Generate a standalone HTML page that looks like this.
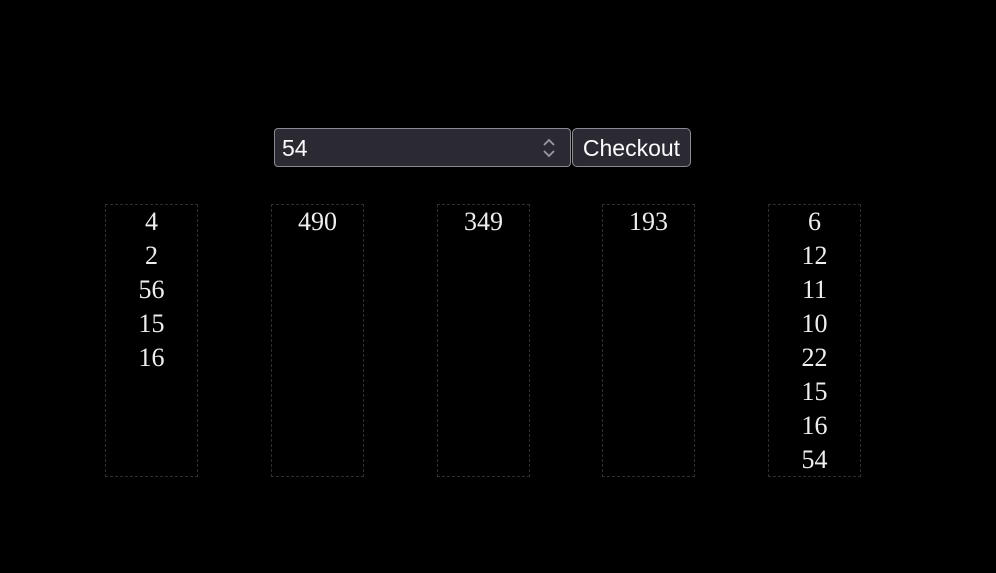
<!DOCTYPE html>
<html><head><style>
html,body{margin:0;background:#000;width:996px;height:573px;overflow:hidden}
.inp{position:absolute;left:274px;top:128px;width:297px;height:39px;box-sizing:border-box;border:1px solid #8a8a92;border-radius:4px;background:#2b2a33;color:#fbfbfe;font:23px "Liberation Sans",sans-serif;line-height:39px;padding-left:7px}
.btn{position:absolute;left:572px;top:128px;width:119px;height:39px;box-sizing:border-box;border:1px solid #8a8a92;border-radius:5px;background:#2b2a33;color:#fbfbfe;font:23px "Liberation Sans",sans-serif;line-height:39px;text-align:center}
.col{position:absolute;top:204px;width:93px;height:273px;box-sizing:border-box;border:1px dashed #2e2e2e;color:#eee;font:26px "Liberation Serif",serif;line-height:34px;text-align:center;padding-top:0}
</style></head><body>
<div class="inp">54<svg style="position:absolute;left:267px;top:8px" width="14" height="22" viewBox="0 0 14 22"><path d="M2 8 L7 3 L12 8 M2 14 L7 19 L12 14" stroke="#9a9aa2" stroke-width="1.8" fill="none"/></svg></div>
<div class="btn">Checkout</div>
<div class="col" style="left:105px">4<br>2<br>56<br>15<br>16</div>
<div class="col" style="left:271px">490</div>
<div class="col" style="left:437px">349</div>
<div class="col" style="left:602px">193</div>
<div class="col" style="left:768px">6<br>12<br>11<br>10<br>22<br>15<br>16<br>54</div>
</body></html>
